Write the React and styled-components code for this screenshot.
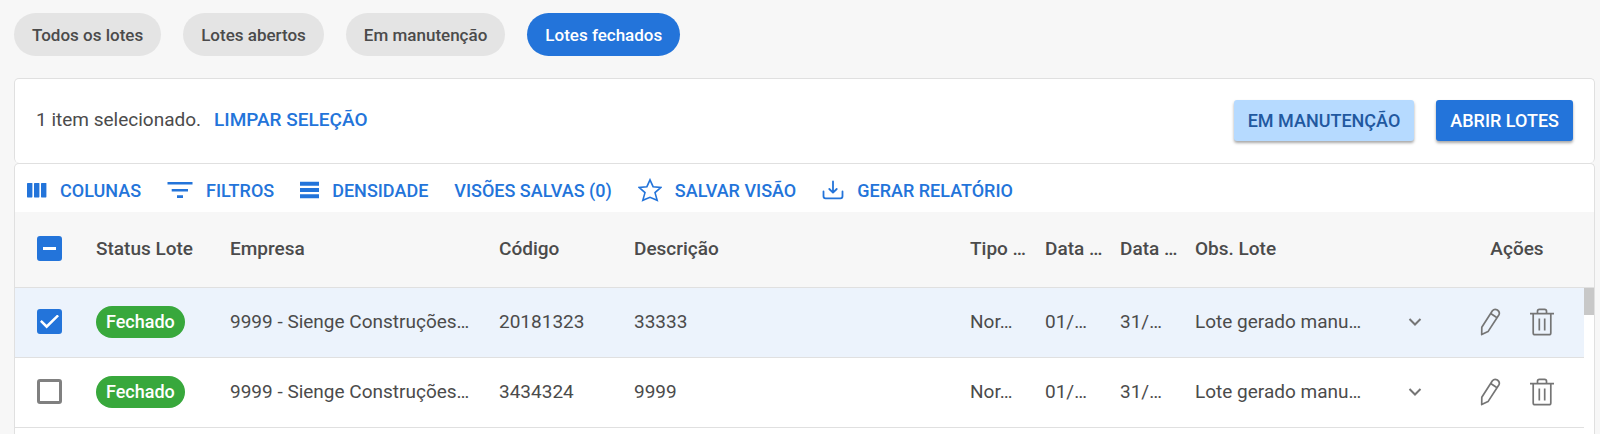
import { useEffect, useRef } from "react";
import styled, { createGlobalStyle, css } from "styled-components";

const tabs = ["Todos os lotes", "Lotes abertos", "Em manutenção", "Lotes fechados"];

const rows = [
  {
    id: 1,
    selected: true,
    status: "Fechado",
    empresa: "9999 - Sienge Construções…",
    codigo: "20181323",
    descricao: "33333",
    tipo: "Nor…",
    inicio: "01/…",
    fim: "31/…",
    obs: "Lote gerado manu…",
  },
  {
    id: 2,
    selected: false,
    status: "Fechado",
    empresa: "9999 - Sienge Construções…",
    codigo: "3434324",
    descricao: "9999",
    tipo: "Nor…",
    inicio: "01/…",
    fim: "31/…",
    obs: "Lote gerado manu…",
  },
];

const ColumnsIcon = () => (
  <svg width="20" height="16" viewBox="0 0 20 16" fill="currentColor" aria-hidden="true">
    <rect x="0" y="1" width="5.4" height="14.4" rx="0.6" />
    <rect x="7" y="1" width="5.4" height="14.4" rx="0.6" />
    <rect x="14" y="1" width="5.4" height="14.4" rx="0.6" />
  </svg>
);

const FilterIcon = () => (
  <svg width="26" height="16" viewBox="0 0 26 16" fill="currentColor" aria-hidden="true">
    <path d="M.5 0h25v2.4H.5zM4.7 7h16.3v2.4H4.7zM10 13.2h6V16h-6z" />
  </svg>
);

const DensityIcon = () => (
  <svg width="19" height="18" viewBox="0 0 19 18" fill="currentColor" aria-hidden="true">
    <path d="M0 .8h19v4H0zM0 7h19v4H0zM0 13.2h19v4H0z" />
  </svg>
);

const StarIcon = () => (
  <svg
    width="24"
    height="24"
    viewBox="0 0 24 24"
    fill="none"
    stroke="currentColor"
    strokeWidth="1.6"
    aria-hidden="true"
  >
    <path d="M12 1.8l3.1 6.9 7.6.8-5.7 5.1 2.2 7.7-7.2-3-7.2 3 2.2-7.7-5.7-5.1 7.6-.8z" />
  </svg>
);

const DownloadIcon = () => (
  <svg
    width="22"
    height="20"
    viewBox="0 0 22 20"
    fill="none"
    stroke="currentColor"
    strokeWidth="1.8"
    strokeLinecap="round"
    strokeLinejoin="round"
    aria-hidden="true"
  >
    <path d="M11 1.5v11M7.3 9l3.7 3.7L14.7 9M1.5 11.5v4.8q0 2 2 2h15q2 0 2-2v-4.8" />
  </svg>
);

const ChevronIcon = () => (
  <svg
    width="14"
    height="10"
    viewBox="0 0 14 10"
    fill="none"
    stroke="currentColor"
    strokeWidth="2"
    aria-hidden="true"
  >
    <path d="M1.5 2L7 7.5 12.5 2" />
  </svg>
);

const PencilIcon = () => (
  <svg
    width="22"
    height="28"
    viewBox="0 0 22 28"
    fill="none"
    stroke="currentColor"
    strokeWidth="1.7"
    strokeLinejoin="round"
    aria-hidden="true"
  >
    <path d="M1.8 19.2L12.4 2.8q2-2.6 5-.8 3 2.1 1.4 5L8 23.6l-6.3 3zM10.7 5.5l6.4 4.3" />
  </svg>
);

const TrashIcon = () => (
  <svg
    width="24"
    height="28"
    viewBox="0 0 24 28"
    fill="none"
    stroke="currentColor"
    strokeWidth="1.7"
    strokeLinejoin="round"
    aria-hidden="true"
  >
    <path d="M0 5.7h24M7.5 5.5V3.2q0-1.9 1.9-1.9h5.2q1.9 0 1.9 1.9v2.3M3.2 5.7v19.2q0 1.8 1.8 1.8h14q1.8 0 1.8-1.8V5.7M9.3 10.5v12M14.7 10.5v12" />
  </svg>
);

const HeaderCheckbox = (props) => {
  const ref = useRef(null);

  useEffect(() => {
    ref.current.indeterminate = true;
  }, []);

  return <Checkbox ref={ref} {...props} />;
};

export default function App() {
  return (
    <Page>
      <GlobalStyle />
      <Tabs aria-label="Filtro de lotes">
        {tabs.map((tab) => (
          <Tab key={tab} type="button" $active={tab === "Lotes fechados"}>
            {tab}
          </Tab>
        ))}
      </Tabs>

      <SelectionBar>
        <SelectionInfo>
          1 item selecionado.
          <ClearButton type="button">LIMPAR SELEÇÃO</ClearButton>
        </SelectionInfo>
        <BulkActions>
          <ActionButton type="button" $light>
            EM MANUTENÇÃO
          </ActionButton>
          <ActionButton type="button">ABRIR LOTES</ActionButton>
        </BulkActions>
      </SelectionBar>

      <Grid>
        <Toolbar>
          <ToolButton type="button">
            <ColumnsIcon />
            COLUNAS
          </ToolButton>
          <ToolButton type="button">
            <FilterIcon />
            FILTROS
          </ToolButton>
          <ToolButton type="button">
            <DensityIcon />
            DENSIDADE
          </ToolButton>
          <ToolButton type="button">VISÕES SALVAS (0)</ToolButton>
          <ToolButton type="button">
            <StarIcon />
            SALVAR VISÃO
          </ToolButton>
          <ToolButton type="button">
            <DownloadIcon />
            GERAR RELATÓRIO
          </ToolButton>
        </Toolbar>

        <Table>
          <colgroup>
            <Col $width={70} />
            <Col $width={134} />
            <Col $width={269} />
            <Col $width={135} />
            <Col />
            <Col $width={75} />
            <Col $width={75} />
            <Col $width={75} />
            <Col $width={266} />
            <Col $width={134} />
            <Col $width={10} />
          </colgroup>
          <thead>
            <tr>
              <Th>
                <HeaderCheckbox aria-label="Selecionar todos" />
              </Th>
              <Th>Status Lote</Th>
              <Th>Empresa</Th>
              <Th>Código</Th>
              <Th>Descrição</Th>
              <Th>Tipo …</Th>
              <Th>Data …</Th>
              <Th>Data …</Th>
              <Th>Obs. Lote</Th>
              <Th $center>Ações</Th>
              <Th as="td" />
            </tr>
          </thead>
          <tbody>
            {rows.map((row, index) => (
              <Row key={row.id} $selected={row.selected}>
                <Td>
                  <Checkbox
                    defaultChecked={row.selected}
                    aria-label={`Selecionar lote ${row.codigo}`}
                  />
                </Td>
                <Td>
                  <Status>{row.status}</Status>
                </Td>
                <Td>{row.empresa}</Td>
                <Td>{row.codigo}</Td>
                <Td>{row.descricao}</Td>
                <Td>{row.tipo}</Td>
                <Td>{row.inicio}</Td>
                <Td>{row.fim}</Td>
                <Td>
                  <Note>
                    {row.obs}
                    <IconButton type="button" aria-label="Ver observação">
                      <ChevronIcon />
                    </IconButton>
                  </Note>
                </Td>
                <Td>
                  <RowActions>
                    <IconButton type="button" aria-label="Editar">
                      <PencilIcon />
                    </IconButton>
                    <IconButton type="button" aria-label="Excluir">
                      <TrashIcon />
                    </IconButton>
                  </RowActions>
                </Td>
                {index === 0 && (
                  <ScrollCell rowSpan={rows.length}>
                    <Thumb />
                  </ScrollCell>
                )}
              </Row>
            ))}
          </tbody>
        </Table>
      </Grid>
    </Page>
  );
}

const GlobalStyle = createGlobalStyle`
  * {
    box-sizing: border-box;
  }

  body {
    margin: 0;
    background: #f7f7f7;
    color: #4b4b4b;
    font-family: Roboto, "Liberation Sans", sans-serif;
    font-size: 19px;
  }

  button {
    border: 0;
    padding: 0;
    background: none;
    color: inherit;
    font: inherit;
    cursor: pointer;
  }

  svg {
    display: block;
    flex: none;
  }
`;

const Page = styled.main`
  display: flex;
  flex-direction: column;
  min-height: 100vh;
  padding: 13px 5px 0 14px;
`;

const Tabs = styled.nav`
  display: flex;
  gap: 22px;
  margin-bottom: 22px;
`;

const Tab = styled.button`
  && {
    height: 43px;
    padding: 0 18px;
    border-radius: 22px;
    background: ${({ $active }) => ($active ? "#2374da" : "#e4e4e4")};
    color: ${({ $active }) => ($active ? "#fff" : "#4b4b4b")};
    font-size: 17px;
    font-weight: 500;
  }
`;

const SelectionBar = styled.section`
  display: flex;
  align-items: center;
  justify-content: space-between;
  height: 85px;
  padding: 0 21px 2px;
  border: 1px solid #e0e0e0;
  border-bottom: 0;
  border-radius: 5px;
  background: #fff;
`;

const SelectionInfo = styled.div`
  display: flex;
  align-items: center;
  gap: 13px;
  padding-bottom: 2px;
`;

const ClearButton = styled.button`
  && {
    color: #2374da;
    font-weight: 500;
  }
`;

const BulkActions = styled.div`
  display: flex;
  gap: 22px;
`;

const ActionButton = styled.button`
  && {
    height: 41px;
    padding: 0 14px;
    border-radius: 3px;
    background: #2374da;
    box-shadow: 0 2px 3px rgba(0, 0, 0, 0.35);
    color: #fff;
    font-size: 18px;
    font-weight: 500;
    ${({ $light }) =>
      $light &&
      css`
        background: #b6daff;
        color: #2158a0;
      `}
  }
`;

const Grid = styled.section`
  flex: 1;
  border: 1px solid #e0e0e0;
  border-bottom: 0;
  border-radius: 5px 5px 0 0;
  background: #fff;
`;

const Toolbar = styled.div`
  display: flex;
  align-items: center;
  gap: 26px;
  height: 48px;
  padding: 4px 12px 0;
`;

const ToolButton = styled.button`
  && {
    display: flex;
    align-items: center;
    gap: 13px;
    color: #2374da;
    font-size: 18px;
    font-weight: 500;
  }
`;

const Table = styled.table`
  width: 100%;
  table-layout: fixed;
  border-collapse: separate;
  border-spacing: 0;
`;

const Col = styled.col`
  width: ${({ $width }) => ($width ? `${$width}px` : "auto")};
`;

const cell = css`
  padding: 0 4px 2px 11px;
  border-bottom: 1px solid #e0e0e0;
  white-space: nowrap;

  &:first-child {
    padding-left: 22px;
  }

  &:nth-child(10) {
    padding-right: 11px;
  }

  &:nth-child(11) {
    padding: 0;
  }
`;

const Th = styled.th`
  ${cell}
  height: 76px;
  background: #f7f7f7;
  font-weight: 500;
  text-align: ${({ $center }) => ($center ? "center" : "left")};
`;

const Td = styled.td`
  ${cell}
  height: 70px;
`;

const Row = styled.tr`
  background: ${({ $selected }) => ($selected ? "#ecf3fc" : "#fff")};
`;

const Checkbox = styled.input.attrs({ type: "checkbox" })`
  appearance: none;
  display: grid;
  place-items: center;
  width: 25px;
  height: 25px;
  margin: 0;
  border: 3px solid #808080;
  border-radius: 3px;
  cursor: pointer;

  &:checked,
  &:indeterminate {
    border-color: #2374da;
    background: #2374da;
  }

  &:indeterminate::before {
    content: "";
    width: 13px;
    height: 3px;
    background: #fff;
  }

  &:checked::before {
    content: "";
    width: 19px;
    height: 14px;
    background: #fff;
    clip-path: polygon(0 51%, 9% 39%, 35% 74%, 91% 0, 100% 12%, 35% 100%);
  }
`;

const Status = styled.span`
  display: inline-block;
  height: 32px;
  padding: 0 10px;
  border-radius: 16px;
  background: #38a83c;
  color: #fff;
  font-size: 18px;
  font-weight: 500;
  line-height: 31px;
  vertical-align: middle;
`;

const Note = styled.div`
  display: flex;
  align-items: center;
  justify-content: space-between;
  padding-right: 24px;
`;

const IconButton = styled.button`
  && {
    color: #757575;
  }
`;

const RowActions = styled.div`
  display: flex;
  align-items: center;
  justify-content: center;
  gap: 28px;
`;

const ScrollCell = styled.td`
  padding: 0;
  background: #fff;
  vertical-align: top;
`;

const Thumb = styled.div`
  height: 27px;
  background: #c8c8c8;
`;
